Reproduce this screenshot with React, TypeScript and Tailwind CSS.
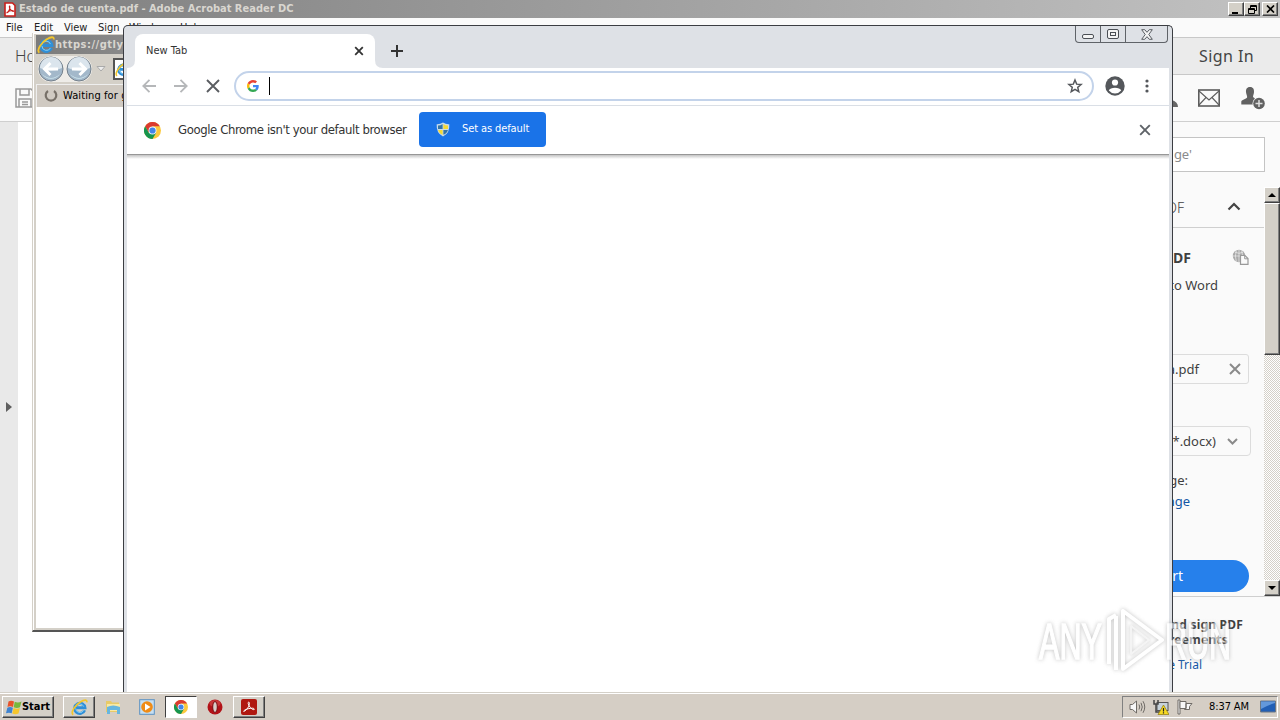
import type { ReactNode } from "react";

const tahoma =
  "font-['DejaVu_Sans_Condensed','DejaVu_Sans',sans-serif] whitespace-nowrap";
const acrobatFont = "font-['Noto_Sans',sans-serif] whitespace-nowrap";

function ChromeLogo({ className }: { className: string }) {
  return (
    <svg className={className} viewBox="0 0 24 24">
      <circle cx="12" cy="12" r="12" fill="#fbc93d" />
      <path d="M1.6 6A12 12 0 0 1 22.4 6H12L6.8 15Z" fill="#db3b30" />
      <path d="M1.6 6A12 12 0 0 0 12 24L17.2 15H6.8Z" fill="#16954f" />
      <circle cx="12" cy="12" r="5.6" fill="#f4f6fa" />
      <circle cx="12" cy="12" r="4.4" fill="#4285e8" />
    </svg>
  );
}

function IeLogo({ className }: { className: string }) {
  return (
    <svg className={className} viewBox="0 0 20 20" fill="none">
      <path
        d="M16 13.2A6 6 0 1 1 16.4 10.4H5"
        stroke="#2f8fd8"
        strokeWidth="3.6"
      />
      <path
        d="M15 13.2A5 5 0 0 1 5.500 11M5.500 9.500A5 5 0 0 1 15 9"
        stroke="#8fd6f7"
        strokeWidth="1"
      />
      <path
        d="M2.6 18.5C-1 16 5 7 11 3.5C15 1 19.5.2 18.5 4"
        stroke="#f3c62b"
        strokeWidth="2"
      />
    </svg>
  );
}

function AcrobatLogo({ className }: { className: string }) {
  return (
    <svg className={className} viewBox="0 0 16 16" fill="none">
      <rect width="16" height="16" rx="2" fill="#b01810" />
      <path
        d="M3 12.3C5.5 11.5 8.6 7 8.4 4.2C8.3 2.6 6.9 2.8 7.2 4.5C7.8 7.3 10.6 10.6 12.8 10.7C14 10.6 13.3 9.2 11.5 9.2C8.5 9.2 5.5 10 3.6 11.2C2.4 12 2.4 12.7 3 12.3Z"
        stroke="#fff"
        strokeWidth="1"
      />
    </svg>
  );
}

// Raised classic Windows button
function ClassicButton({
  className = "",
  children,
}: {
  className?: string;
  children?: ReactNode;
}) {
  return (
    <div
      className={`flex items-center justify-center border border-t-white border-l-white border-r-[#404040] border-b-[#404040] bg-[#d4d0c8] shadow-[inset_-1px_-1px_0_#808080] ${className}`}
    >
      {children}
    </div>
  );
}

function AcrobatTitleBar() {
  return (
    <div className="flex h-[18px] items-center bg-linear-to-r from-[#7f7f7f] to-[#c2c2c2] pr-[2px] pl-[4px]">
      <svg className="h-[15px] w-[12px]" viewBox="0 0 12 15" fill="none">
        <path d="M1 1H8.5L11 3.5V14H1Z" fill="#fff" stroke="#c8201c" strokeWidth="1.6" />
        <path
          d="M2.5 11C4.5 10 6 7 5.8 4.5C5.5 3.5 5 5 6 6.8C7 8.5 8.5 9.6 9.6 9.2C9 8.2 5 8.6 3 10.5"
          stroke="#c8201c"
          strokeWidth="1.2"
        />
      </svg>
      <span
        className={`${tahoma} ml-[3px] pt-px text-[11px] font-bold text-[#d9d6d0]`}
      >
        Estado de cuenta.pdf - Adobe Acrobat Reader DC
      </span>
      <div className="ml-auto flex">
        <ClassicButton className="h-[14px] w-[16px]">
          <span className="mt-[7px] mr-[2px] h-[2px] w-[6px] bg-black" />
        </ClassicButton>
        <ClassicButton className="h-[14px] w-[16px]">
          <svg className="h-[9px] w-[9px]" viewBox="0 0 9 9" fill="none" stroke="#000">
            <path d="M2.5 3V.5H8.5V5.5H6.5M2.5 1.5H8.5M.5 3.5H6.5V8.5H.5ZM.5 4.5H6.5" />
          </svg>
        </ClassicButton>
        <ClassicButton className="ml-[2px] h-[14px] w-[16px]">
          <svg className="h-[8px] w-[9px]" viewBox="0 0 9 8" stroke="#000" strokeWidth="1.7">
            <path d="M1 .5L8 7.5M8 .5L1 7.5" />
          </svg>
        </ClassicButton>
      </div>
    </div>
  );
}

function ToolsPane() {
  return (
    <aside
      className={`${acrobatFont} flex w-[264px] flex-col bg-[#fafafa] text-[13px] text-[#3f3f3f]`}
    >
      <div className="mt-[15px] mr-[15px] flex h-[35px] items-center border border-[#c4c4c4] bg-white">
        <span className="w-[175px] text-right text-[#8b8b8b]">ge'</span>
      </div>
      <div className="mt-[15px] flex h-[409px]">
        <div className="flex flex-1 flex-col">
          <div className="flex h-[41px] items-center border-b border-[#cfcfcf]">
            <span className="w-[168px] text-right text-[14px] font-light">PDF</span>
            <svg className="mb-[2px] ml-[43px] h-[9px] w-[14px]" viewBox="0 0 14 9" fill="none">
              <path d="M1.5 7.5L7 2L12.5 7.5" stroke="#444" strokeWidth="2.2" />
            </svg>
          </div>
          <div className="mt-[19px] flex h-[20px] items-center">
            <span className="w-[175px] text-right text-[14px] font-bold">PDF</span>
            <svg className="ml-[41px] h-[16px] w-[17px]" viewBox="0 0 17 16" fill="none">
              <circle cx="7" cy="7" r="6.2" fill="#a9a9a9" />
              <path
                d="M7 1V13M1 7H13M3 3.2Q7 5.5 11 3.2M4.3 1.6Q2.5 7 4.3 12.5M9.7 1.6Q11.5 7 9.7 12.5"
                stroke="#eee"
                strokeWidth=".7"
              />
              <path d="M8.5 6.5H13L16 9.5V15.3H8.5Z" fill="#fafafa" stroke="#999" strokeWidth="1.2" />
              <path d="M12.7 6.8V9.8H16" stroke="#999" />
            </svg>
          </div>
          <span className="mt-[8px] h-[20px] w-[202px] text-right leading-[20px]">
            to Word
          </span>
          <div className="mt-[59px] mr-[15px] flex h-[30px] items-center rounded-[3px] border border-[#dcdcdc]">
            <span className="w-[182px] pt-px text-right">cuenta.pdf</span>
            <svg className="ml-[30px] h-[12px] w-[12px]" viewBox="0 0 12 12">
              <path d="M1 1L11 11M11 1L1 11" stroke="#8a8a8a" strokeWidth="2" />
            </svg>
          </div>
          <div className="mt-[42px] mr-[13px] flex h-[30px] items-center rounded-[4px] border border-[#dcdcdc]">
            <span className="w-[199px] pt-[2px] text-right">(*.docx)</span>
            <svg className="ml-[11px] h-[7px] w-[11px]" viewBox="0 0 11 7" fill="none">
              <path d="M1 1L5.5 5.5L10 1" stroke="#8a8a8a" strokeWidth="2" />
            </svg>
          </div>
          <span className="mt-[14px] h-[21px] w-[172px] text-right leading-[21px]">
            language:
          </span>
          <span className="h-[21px] w-[174px] text-right leading-[21px] text-[#1257a6]">
            Change
          </span>
          <div className="mt-[48px] mr-[15px] flex h-[32px] items-center rounded-full bg-[#2680eb] text-white">
            <span className="w-[167px] pb-px text-right text-[14px]">Convert</span>
          </div>
        </div>
        <div className="flex w-[16px] flex-col bg-[repeating-conic-gradient(#d4d0c8_0_25%,#fff_0_50%)] bg-[length:2px_2px]">
          <ClassicButton className="h-[16px]">
            <span className="border-x-[4px] border-b-[4px] border-x-transparent border-b-black" />
          </ClassicButton>
          <ClassicButton className="h-[152px]" />
          <ClassicButton className="mt-auto h-[16px]">
            <span className="border-x-[4px] border-t-[4px] border-x-transparent border-t-black" />
          </ClassicButton>
        </div>
      </div>
      <div className="flex flex-1 flex-col border-t border-[#cfcfcf] pt-[20px]">
        <span className="w-[227px] text-right text-[12px] leading-[15px] font-bold tracking-[0.2px]">
          and sign PDF
        </span>
        <span className="w-[212px] text-right text-[12px] leading-[15px] font-bold tracking-[0.2px]">
          agreements
        </span>
        <span className="mt-[8px] w-[186px] text-right text-[12px] leading-[20px] text-[#1257a6]">
          Free Trial
        </span>
      </div>
    </aside>
  );
}

function AcrobatWindow() {
  return (
    <div className="flex h-[692px] flex-col bg-white">
      <AcrobatTitleBar />
      <nav
        className={`${tahoma} flex h-[19px] items-center bg-[#fafafa] pt-[2px] pl-[6px] text-[11px] text-[#222]`}
      >
        <span className="w-[28px]">File</span>
        <span className="w-[30px]">Edit</span>
        <span className="w-[34px]">View</span>
        <span className="w-[31px]">Sign</span>
        <span className="w-[51px]">Window</span>
        <span>Help</span>
      </nav>
      <div
        className={`${acrobatFont} flex h-[38px] items-center border-y border-[#c8c8c8] bg-[#ebebeb] pl-[15px] text-[16px] text-[#444]`}
      >
        <span className="font-light">Home</span>
        <span className="mr-[26px] ml-auto tracking-[0.4px]">Sign In</span>
      </div>
      <div className="flex h-[47px] items-center border-b border-[#cfcfcf] bg-[#fafafa] pl-[15px]">
        <svg className="h-[20px] w-[20px]" viewBox="0 0 20 20" fill="none" stroke="#999" strokeWidth="1.5">
          <path d="M1 1H16L19 4V19H1ZM5 1V7H14V1M4 19V11H16V19M7 14H13M7 16.5H13" />
        </svg>
        <svg className="ml-auto h-[20px] w-[20px]" viewBox="0 0 20 20">
          <path d="M2 19Q2 15 7 14L10 3L14 12Q20 14 20 19Z" fill="#666" />
        </svg>
        <svg className="ml-[20px] h-[18px] w-[22px]" viewBox="0 0 22 18" fill="none" stroke="#5d5d5d">
          <rect x=".8" y="1" width="20.4" height="16" strokeWidth="1.6" />
          <path d="M1 2L11 11L21 2M1 16L8 8.5M21 16L14 8.5" strokeWidth="1.1" />
        </svg>
        <svg className="mr-[15px] ml-[21px] h-[24px] w-[24px]" viewBox="0 0 24 24">
          <path
            d="M9 1C5.7 1 4.8 3.5 5 6C5.1 8 6 9 6.2 11C6 13 1 13.5.3 15.5V18.5H12L14 12.5L12 11C12 9 13 8 13 6C13.2 3.5 12.3 1 9 1Z"
            fill="#616161"
          />
          <circle cx="18" cy="17.5" r="6.5" fill="#fafafa" />
          <circle cx="18" cy="17.5" r="5.8" fill="#616161" />
          <path d="M18 14V21M14.5 17.5H21.5" stroke="#ddd" strokeWidth="1.5" />
        </svg>
      </div>
      <div className="flex flex-1">
        <div className="flex w-[18px] items-center justify-center bg-[#e9e9e9]">
          <span className="border-y-[5px] border-l-[6px] border-y-transparent border-l-[#5f5f5f]" />
        </div>
        <main className="flex-1 bg-white" />
        <ToolsPane />
      </div>
    </div>
  );
}

function ExplorerNavButton({ flip = false }: { flip?: boolean }) {
  return (
    <svg
      className={`h-[26px] w-[26px] ${flip ? "-scale-x-100" : ""}`}
      viewBox="0 0 26 26"
      fill="none"
    >
      <circle cx="13" cy="13" r="12" fill="#a3b8ca" stroke="#75818c" />
      <path d="M2 12A11 11 0 0 1 24 12Q13 17 2 12Z" fill="#dbe5ed" />
      <path d="M4 18A11 11 0 0 0 22 18Q13 26 4 18Z" fill="#cfe7ee" />
      <path d="M20 13H7M12.5 7L6.5 13L12.5 19" stroke="#fff" strokeWidth="3" />
    </svg>
  );
}

function ExplorerWindow() {
  return (
    <div className="absolute top-[33px] left-[32px] flex h-[599px] w-[400px] flex-col overflow-hidden border-b-2 border-l border-b-[#555] border-l-[#d4d0c8] bg-[#d4d0c8] pb-[2px] pl-[3px] shadow-[inset_1px_1px_0_#fff]">
      <div className="mt-[2px] flex h-[19px] shrink-0 items-center bg-linear-to-r from-[#7b7b7b] to-[#bdbdbd] pl-[1px]">
        <IeLogo className="h-[18px] w-[18px]" />
        <span className={`${tahoma} pt-[2px] text-[11px] font-bold tracking-[0.5px] text-[#d9d6d0]`}>
          https://gtly.to
        </span>
      </div>
      <div className="flex h-[30px] shrink-0 items-center pl-[2px]">
        <div className="flex gap-[2px] rounded-full bg-[#eeece8]">
          <ExplorerNavButton />
          <ExplorerNavButton flip />
        </div>
        <svg className="ml-[4px] h-[6px] w-[10px]" viewBox="0 0 10 6">
          <path d="M1 .5H9L5 5Z" fill="#eee" stroke="#aaa" />
        </svg>
        <div className="ml-[7px] flex h-[22px] w-[200px] items-center border-2 border-[#555] bg-white">
          <IeLogo className="h-[16px] w-[16px]" />
        </div>
      </div>
      <div className="flex h-[23px] shrink-0 items-center border-t border-l border-[#eee] bg-[#d0cac2] pl-[7px]">
        <svg className="h-[14px] w-[14px]" viewBox="0 0 14 14" fill="none">
          <path d="M4 2A5.300 5.300 0 1 0 10 2" stroke="#777068" strokeWidth="2.200" />
        </svg>
        <span className={`${tahoma} ml-[5px] text-[11px] tracking-[0.1px] text-black`}>
          Waiting for gtly.to...
        </span>
      </div>
      <div className="flex-1 bg-white" />
    </div>
  );
}

function ChromeTabStrip() {
  return (
    <div className="flex h-[42px] items-end">
      <svg className="h-[8px] w-[8px]" viewBox="0 0 8 8">
        <path d="M0 8Q8 8 8 0V8Z" fill="#fff" />
      </svg>
      <div
        className={`${tahoma} flex h-[34px] w-[240px] items-center rounded-t-[8px] bg-white px-[11px] text-[11px] text-[#333]`}
      >
        <span className="pt-px">New Tab</span>
        <svg className="ml-auto h-[10px] w-[10px]" viewBox="0 0 10 10">
          <path d="M1.200 1.200L8.800 8.800M8.800 1.200L1.200 8.800" stroke="#333" strokeWidth="1.800" />
        </svg>
      </div>
      <svg className="h-[8px] w-[8px]" viewBox="0 0 8 8">
        <path d="M8 8Q0 8 0 0V8Z" fill="#fff" />
      </svg>
      <svg className="mb-[11px] ml-[8px] h-[12px] w-[12px]" viewBox="0 0 12 12">
        <path d="M6 0V12M0 6H12" stroke="#333" strokeWidth="2" />
      </svg>
      <div className="mr-px ml-auto flex h-[17px] w-[93px] self-start rounded-b-[4px] border border-t-0 border-[#5f6368]">
        <div className="flex w-[25px] items-center justify-center border-r border-[#5f6368]">
          <span className="mt-[5px] h-[5px] w-[12px] rounded-[2px] border border-[#4b4f55] bg-[#f4f4f4]" />
        </div>
        <div className="flex w-[25px] items-center justify-center border-r border-[#5f6368]">
          <div className="flex h-[10px] w-[12px] items-center justify-center rounded-[2px] border border-[#4b4f55] bg-[#f4f4f4]">
            <span className="h-[4px] w-[6px] border border-[#4b4f55]" />
          </div>
        </div>
        <div className="flex flex-1 items-center justify-center">
          <svg className="h-[11px] w-[12px]" viewBox="0 0 12 11">
            <path
              d="M.7.700H3.700L6 3.300L8.300.700H11.300L7.800 5.500L11.300 10.300H8.300L6 7.700L3.700 10.300H.7L4.200 5.500Z"
              fill="#f4f4f4"
              stroke="#4b4f55"
              strokeWidth=".9"
            />
          </svg>
        </div>
      </div>
    </div>
  );
}

function GoogleG() {
  return (
    <svg className="h-[12px] w-[12px]" viewBox="0 0 48 48">
      <path fill="#EA4335" d="M24 9.500c3.540 0 6.710 1.220 9.210 3.600l6.850-6.850C35.900 2.380 30.470 0 24 0 14.620 0 6.510 5.380 2.560 13.220l7.980 6.190C12.430 13.720 17.740 9.500 24 9.500z" />
      <path fill="#4285F4" d="M46.980 24.550c0-1.570-.15-3.090-.38-4.550H24v9.020h12.940c-.58 2.960-2.260 5.480-4.780 7.180l7.730 6c4.510-4.180 7.090-10.360 7.090-17.650z" />
      <path fill="#FBBC05" d="M10.530 28.590c-.48-1.450-.76-2.990-.76-4.590s.27-3.140.76-4.590l-7.980-6.190C.92 16.460 0 20.120 0 24c0 3.880.92 7.540 2.560 10.780l7.970-6.190z" />
      <path fill="#34A853" d="M24 48c6.480 0 11.930-2.130 15.890-5.810l-7.730-6c-2.150 1.450-4.920 2.300-8.160 2.300-6.260 0-11.570-4.220-13.470-9.910l-7.980 6.190C6.510 42.620 14.620 48 24 48z" />
    </svg>
  );
}

function ChromeToolbar() {
  return (
    <div className="flex h-[38px] items-center border-b border-[#dadfe6] bg-white pb-px pl-[15px]">
      <svg className="h-[14px] w-[14px]" viewBox="0 0 14 14" fill="none">
        <path d="M14 7H1.500M7.500 .8L1.300 7L7.500 13.200" stroke="#b5b7b9" strokeWidth="1.800" />
      </svg>
      <svg className="ml-[18px] h-[14px] w-[14px]" viewBox="0 0 14 14" fill="none">
        <path d="M0 7H12.500M6.500 .8L12.700 7L6.500 13.200" stroke="#b5b7b9" strokeWidth="1.800" />
      </svg>
      <svg className="ml-[18px] h-[14px] w-[14px]" viewBox="0 0 14 14">
        <path d="M1 1L13 13M13 1L1 13" stroke="#5a5d61" strokeWidth="1.900" />
      </svg>
      <div className="ml-[14px] flex h-[30px] w-[860px] items-center rounded-full border-2 border-[#c3d3ea] bg-white pr-[9px] pl-[11px]">
        <GoogleG />
        <span className="ml-[10px] h-[18px] w-px bg-black" />
        <svg className="ml-auto h-[16px] w-[16px]" viewBox="0 0 24 24" fill="none">
          <path
            d="M12 3L14.500 9.200L21.200 9.700L16.100 14L17.700 20.600L12 17.100L6.300 20.600L7.900 14L2.800 9.700L9.500 9.200Z"
            stroke="#54575b"
            strokeWidth="2.200"
          />
        </svg>
      </div>
      <svg className="ml-[11px] h-[20px] w-[20px]" viewBox="0 0 20 20">
        <circle cx="10" cy="10" r="9.700" fill="#54575b" />
        <circle cx="10" cy="6.500" r="3.100" fill="#fff" />
        <path d="M3.800 14.500C5 10.800 15 10.800 16.200 14.500A8 8 0 0 1 3.800 14.500Z" fill="#fff" />
      </svg>
      <svg className="ml-[20px] h-[14px] w-[4px]" viewBox="0 0 4 14" fill="#54575b">
        <circle cx="2" cy="2" r="1.600" />
        <circle cx="2" cy="7" r="1.600" />
        <circle cx="2" cy="12" r="1.600" />
      </svg>
    </div>
  );
}

function DefaultBrowserBar() {
  return (
    <div
      className={`${tahoma} flex h-[49px] items-center border-b border-[#979797] bg-white pr-[18px] pb-px pl-[17px]`}
    >
      <ChromeLogo className="mt-px h-[17px] w-[17px]" />
      <span className="ml-[17px] w-[241px] text-[13px] tracking-[-0.4px] text-[#333]">
        Google Chrome isn't your default browser
      </span>
      <button className="flex h-[35px] w-[127px] items-center rounded-[4px] bg-[#1a73e8] pl-[17px] text-[11px] text-white">
        <svg className="h-[15px] w-[14px]" viewBox="0 0 14 15">
          <path d="M7 .5Q10 2.500 13.300 2.200Q14 11 7 14.500Q0 11 .7 2.200Q4 2.500 7 .5Z" fill="#c9dcea" />
          <path d="M6.600 2V7.100H2V3.500Q4.500 3.600 6.600 2Z" fill="#3475a8" />
          <path d="M7.400 2V7.100H12V3.500Q9.500 3.600 7.400 2Z" fill="#f5d936" />
          <path d="M6.600 12.800V7.900H2.100Q2.700 11 6.600 12.800Z" fill="#f5d936" />
          <path d="M7.400 12.800V7.900H11.900Q11.300 11 7.400 12.800Z" fill="#3475a8" />
        </svg>
        <span className="ml-[12px] tracking-[-0.1px]">Set as default</span>
      </button>
      <svg className="mt-px ml-auto h-[12px] w-[12px]" viewBox="0 0 12 12">
        <path d="M1.200 1.200L10.800 10.800M10.800 1.200L1.200 10.800" stroke="#5f6368" strokeWidth="1.900" />
      </svg>
    </div>
  );
}

function ChromeWindow() {
  return (
    <div className="absolute top-[25px] left-[123px] flex h-[667px] w-[1050px] flex-col rounded-t-[5px] border border-b-0 border-[#3b3d42] bg-[#dee1e6] px-[3px]">
      <ChromeTabStrip />
      <ChromeToolbar />
      <DefaultBrowserBar />
      <div className="h-[4px] bg-linear-to-b from-[#c4c4c4] to-white" />
      <div className="flex-1 bg-white" />
    </div>
  );
}

function Watermark() {
  return (
    <svg
      className="absolute top-[604px] left-[1030px] h-[76px] w-[212px] drop-shadow-[0_0_2px_#999] opacity-60"
      viewBox="0 0 212 76"
      fill="none"
    >
      <g
        className="font-['Liberation_Sans_Narrow','Liberation_Sans',sans-serif] text-[50px]"
        fill="#fff"
        stroke="#fff"
        strokeWidth="1.5"
      >
        <text x="9" y="55" textLength="63" lengthAdjust="spacingAndGlyphs">
          ANY
        </text>
        <text x="135" y="55" textLength="66" lengthAdjust="spacingAndGlyphs">
          RUN
        </text>
      </g>
      <g stroke="#fff" strokeWidth="4" strokeLinejoin="round">
        <path d="M79 60V15L86 11" />
        <path d="M86 66V12" />
        <path d="M93 7V65L132 36Z" />
        <path d="M101 22L119 36L101 50Z" stroke="#eee" strokeWidth="2" />
      </g>
    </svg>
  );
}

function Taskbar() {
  return (
    <footer className="flex h-[28px] items-center border-t border-[#d4d0c8] bg-[#d5cec5] pt-px pr-[2px] pl-[2px] shadow-[inset_0_1px_0_#fff]">
      <ClassicButton className="h-[22px] w-[52px]">
        <svg className="h-[15px] w-[16px]" viewBox="0 0 16 15">
          <path d="M2.500 1.500Q5 0 8 1.500L7 7Q4 5.500 1.500 7Z" fill="#e8532a" />
          <path d="M8.700 1.800Q12 3.200 15.500 1.600L14 7.200Q11 8.600 7.700 7.300Z" fill="#78b83c" />
          <path d="M1.300 7.800Q4 6.300 6.900 7.800L5.700 13.300Q3 12 0 13.300Z" fill="#3f83d0" />
          <path d="M7.600 8.100Q11 9.400 13.900 8L12.500 13.500Q9.500 15 6.300 13.600Z" fill="#f6c62d" />
        </svg>
        <span className={`${tahoma} pt-px text-[11px] font-bold text-black`}>Start</span>
      </ClassicButton>
      <ClassicButton className="ml-[9px] h-[22px] w-[32px]">
        <IeLogo className="h-[17px] w-[17px]" />
      </ClassicButton>
      <svg className="ml-[10px] h-[16px] w-[16px]" viewBox="0 0 16 16">
        <path d="M1 2H6L7 3.500H14V13H1Z" fill="#e8ca68" />
        <path d="M2 5H15V12H2Z" fill="#f9e9a4" />
        <path d="M2 8Q8 5 15 8V15H12V11H5V15H2Z" fill="#67b6df" />
      </svg>
      <svg className="ml-[18px] h-[16px] w-[16px]" viewBox="0 0 16 16">
        <rect x=".7" y=".7" width="14.600" height="14.600" fill="#c6dff2" stroke="#5b91c2" />
        <circle cx="8" cy="8" r="5.800" fill="#ef8b16" />
        <path d="M6 4.500L11.500 8L6 11.500Z" fill="#fff" />
      </svg>
      <div className="ml-[10px] flex h-[22px] w-[32px] items-center justify-center border border-t-[#404040] border-r-white border-b-white border-l-[#404040] bg-white">
        <ChromeLogo className="h-[14px] w-[14px]" />
      </div>
      <svg className="ml-[10px] h-[16px] w-[16px]" viewBox="0 0 16 16">
        <circle cx="8" cy="8" r="7.500" fill="#b21218" />
        <ellipse cx="8" cy="4.500" rx="5.500" ry="3.500" fill="#dd5b58" fillOpacity=".5" />
        <ellipse cx="8" cy="8" rx="2.300" ry="5.500" fill="#d9cdc8" stroke="#760b10" />
      </svg>
      <ClassicButton className="ml-[10px] h-[22px] w-[32px]">
        <AcrobatLogo className="h-[16px] w-[16px]" />
      </ClassicButton>
      <div className="ml-auto flex h-[22px] w-[156px] items-center border border-t-[#808080] border-r-white border-b-white border-l-[#808080] pl-[6px]">
        <svg className="h-[16px] w-[17px]" viewBox="0 0 17 16" fill="none" stroke="#6f6b66">
          <path d="M1 5.500H3.500L7.500 2V14L3.500 10.500H1Z" fill="#f7f7f7" />
          <path d="M10 5.500Q11.500 8 10 10.500M12 3.800Q14.500 8 12 12.200M14 2.200Q17.500 8 14 13.800" />
        </svg>
        <svg className="ml-[7px] h-[16px] w-[16px]" viewBox="0 0 16 16" fill="none">
          <rect x="4" y="3.500" width="11" height="8" fill="#c7d2da" stroke="#555" />
          <path d="M1 1V5H5V1M3 5V13H7" stroke="#444" strokeWidth="1.500" />
          <path d="M10.500 6L16 15.500H5Z" fill="#f6d922" stroke="#8f7a0a" strokeWidth=".7" />
          <path d="M10.500 9V12.500M10.500 13.200V14.500" stroke="#222" strokeWidth="1.200" />
        </svg>
        <svg className="ml-[8px] h-[16px] w-[16px]" viewBox="0 0 16 16" fill="#f8f8f8" stroke="#6f6b66">
          <path d="M1 1H3V15H1Z" />
          <path d="M3 2.500H9V9.500H3ZM9 4.500H15L12.500 7.500V10.500H7.500V9.500H9Z" />
        </svg>
        <span className={`${tahoma} ml-[16px] pt-px text-[11px] tracking-[-0.1px] text-black`}>
          8:37 AM
        </span>
        <svg className="mr-px ml-auto h-[14px] w-[16px]" viewBox="0 0 16 14">
          <path d="M.5 1H15.500V12H.5Z" fill="#225fb5" stroke="#6c7784" />
          <path d="M1 1.500H15V3Q8 5 1 9Z" fill="#6398db" />
        </svg>
      </div>
    </footer>
  );
}

export default function App() {
  return (
    <div className="relative h-[720px] w-[1280px] overflow-hidden bg-white">
      <AcrobatWindow />
      <ExplorerWindow />
      <ChromeWindow />
      <Watermark />
      <Taskbar />
    </div>
  );
}
